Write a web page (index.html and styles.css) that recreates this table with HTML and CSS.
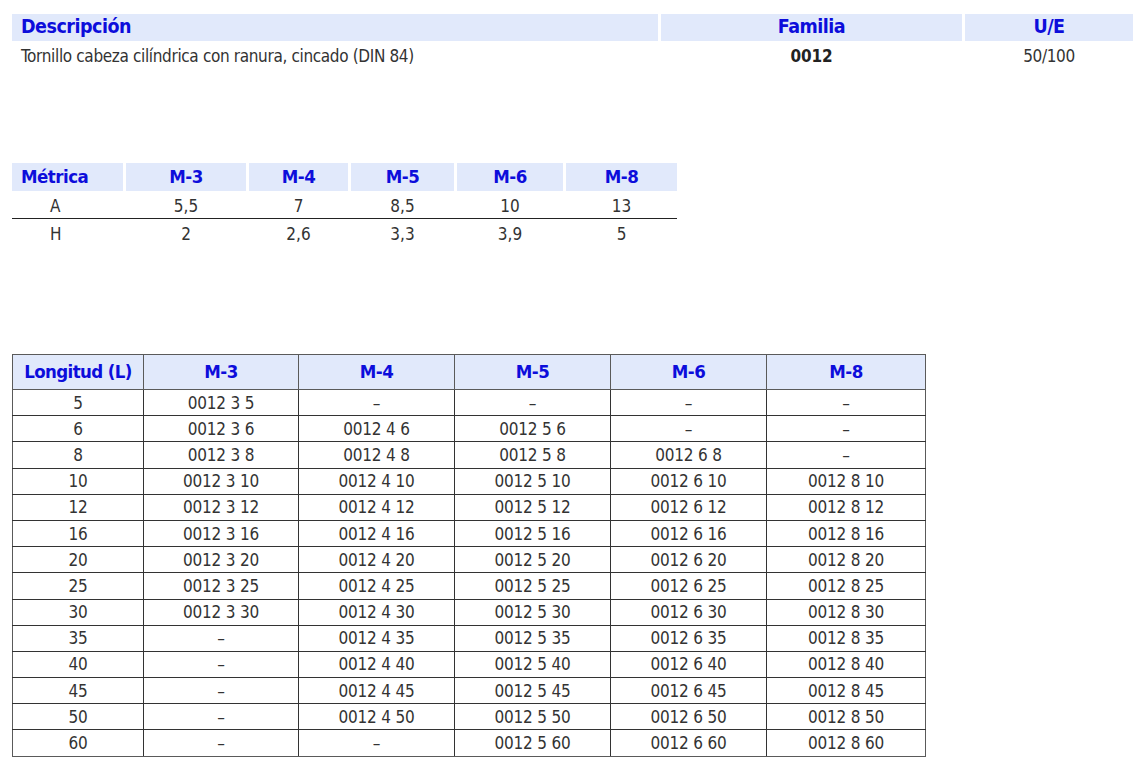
FILE: index.html
```html
<!DOCTYPE html>
<html lang="es">
<head>
<meta charset="utf-8">
<title>Tornillo cabeza cilíndrica</title>
<link rel="stylesheet" href="styles.css">
</head>
<body>
<section class="info">
  <div class="info-row head">
    <div class="c left">Descripción</div>
    <div class="c">Familia</div>
    <div class="c">U/E</div>
  </div>
  <div class="info-row data">
    <div class="c left">Tornillo cabeza cilíndrica con ranura, cincado (DIN 84)</div>
    <div class="c strong">0012</div>
    <div class="c">50/100</div>
  </div>
</section>

<section class="metric">
  <div class="m-row head">
    <div class="c left">Métrica</div>
    <div class="c">M-3</div>
    <div class="c">M-4</div>
    <div class="c">M-5</div>
    <div class="c">M-6</div>
    <div class="c">M-8</div>
  </div>
  <div class="m-row data ruled">
    <div class="c key">A</div>
    <div class="c">5,5</div>
    <div class="c">7</div>
    <div class="c">8,5</div>
    <div class="c">10</div>
    <div class="c">13</div>
  </div>
  <div class="m-row data">
    <div class="c key">H</div>
    <div class="c">2</div>
    <div class="c">2,6</div>
    <div class="c">3,3</div>
    <div class="c">3,9</div>
    <div class="c">5</div>
  </div>
</section>

<table class="codes">
  <colgroup>
    <col class="w1"><col class="w2"><col class="w3"><col class="w4"><col class="w5"><col class="w6">
  </colgroup>
  <thead>
    <tr><th>Longitud (L)</th><th>M-3</th><th>M-4</th><th>M-5</th><th>M-6</th><th>M-8</th></tr>
  </thead>
  <tbody>
    <tr><td>5</td><td>0012 3 5</td><td>–</td><td>–</td><td>–</td><td>–</td></tr>
    <tr><td>6</td><td>0012 3 6</td><td>0012 4 6</td><td>0012 5 6</td><td>–</td><td>–</td></tr>
    <tr><td>8</td><td>0012 3 8</td><td>0012 4 8</td><td>0012 5 8</td><td>0012 6 8</td><td>–</td></tr>
    <tr><td>10</td><td>0012 3 10</td><td>0012 4 10</td><td>0012 5 10</td><td>0012 6 10</td><td>0012 8 10</td></tr>
    <tr><td>12</td><td>0012 3 12</td><td>0012 4 12</td><td>0012 5 12</td><td>0012 6 12</td><td>0012 8 12</td></tr>
    <tr><td>16</td><td>0012 3 16</td><td>0012 4 16</td><td>0012 5 16</td><td>0012 6 16</td><td>0012 8 16</td></tr>
    <tr><td>20</td><td>0012 3 20</td><td>0012 4 20</td><td>0012 5 20</td><td>0012 6 20</td><td>0012 8 20</td></tr>
    <tr><td>25</td><td>0012 3 25</td><td>0012 4 25</td><td>0012 5 25</td><td>0012 6 25</td><td>0012 8 25</td></tr>
    <tr><td>30</td><td>0012 3 30</td><td>0012 4 30</td><td>0012 5 30</td><td>0012 6 30</td><td>0012 8 30</td></tr>
    <tr><td>35</td><td>–</td><td>0012 4 35</td><td>0012 5 35</td><td>0012 6 35</td><td>0012 8 35</td></tr>
    <tr><td>40</td><td>–</td><td>0012 4 40</td><td>0012 5 40</td><td>0012 6 40</td><td>0012 8 40</td></tr>
    <tr><td>45</td><td>–</td><td>0012 4 45</td><td>0012 5 45</td><td>0012 6 45</td><td>0012 8 45</td></tr>
    <tr><td>50</td><td>–</td><td>0012 4 50</td><td>0012 5 50</td><td>0012 6 50</td><td>0012 8 50</td></tr>
    <tr><td>60</td><td>–</td><td>–</td><td>0012 5 60</td><td>0012 6 60</td><td>0012 8 60</td></tr>
  </tbody>
</table>
</body>
</html>
```

FILE: styles.css
```css
html, body {
  margin: 0;
  padding: 0;
  background: #ffffff;
}

body {
  padding: 14px 0 0 12px;
  font-family: "Liberation Sans Narrow", "DejaVu Sans Condensed", "Open Sans", "Liberation Sans", sans-serif;
  font-stretch: condensed;
  color: #333333;
  font-size: 17px;
}

.head .c,
.codes th {
  color: #0d0ddb;
  font-weight: bold;
}

.c {
  text-align: center;
  white-space: nowrap;
}

.c.left {
  text-align: left;
  padding-left: 9px;
}

/* Top table */
.info {
  width: 1121px;
}

.info-row {
  display: grid;
  grid-template-columns: 646px 301px 168px;
  column-gap: 3px;
}

.info-row.head .c {
  background: #e1e9fb;
  height: 27px;
  line-height: 26px;
  font-size: 19.5px;
  letter-spacing: -0.5px;
}

.info-row.data .c {
  height: 29px;
  line-height: 30px;
  font-size: 17px;
  letter-spacing: -0.35px;
}

.info-row.data .c.strong {
  font-weight: bold;
  color: #222222;
  letter-spacing: -0.2px;
}

/* Metric table */
.metric {
  width: 665px;
  margin-top: 93px;
}

.m-row {
  display: grid;
  grid-template-columns: 111px 120px 99px 103px 106px 111px;
  column-gap: 3px;
}

.m-row.head .c {
  background: #e1e9fb;
  height: 28px;
  line-height: 27px;
  font-size: 18.5px;
  letter-spacing: -0.5px;
}

.m-row.data .c {
  height: 27px;
  line-height: 31px;
  font-size: 17px;
}

.m-row.ruled {
  border-bottom: 1px solid #222222;
}

.m-row.data .c.key {
  text-align: left;
  padding-left: 38px;
}

/* Codes table */
.codes {
  margin-top: 108px;
  border-collapse: collapse;
  table-layout: fixed;
  width: 913px;
  font-size: 17px;
}

.w1 { width: 131px; }
.w2 { width: 155px; }
.w3 { width: 156px; }
.w4 { width: 156px; }
.w5 { width: 156px; }
.w6 { width: 159px; }

.codes th {
  background: #e1e9fb;
  height: 32px;
  padding: 0 0 2px 0;
  font-size: 18.5px;
  letter-spacing: -0.6px;
  border: 1px solid #5a5a5a;
  text-align: center;
}

.codes td {
  height: 25.2px;
  padding: 0;
  text-align: center;
  border: 1px solid #333333;
  line-height: 24px;
  white-space: nowrap;
  letter-spacing: -0.2px;
}

.codes tbody tr:first-child td {
  border-top: none;
}

.codes td:first-child,
.codes th:first-child {
  border-left-color: #5a5a5a;
}

.codes td:last-child,
.codes th:last-child {
  border-right-color: #5a5a5a;
}

.codes tbody tr:last-child td {
  border-bottom-color: #5a5a5a;
}
```
